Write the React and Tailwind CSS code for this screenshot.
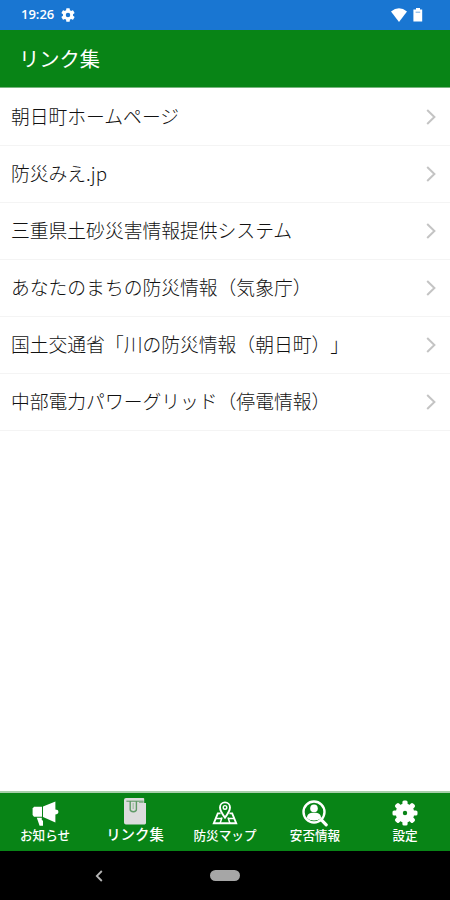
import React, { useState } from 'react';

const LINKS = [
  '朝日町ホームページ',
  '防災みえ.jp',
  '三重県土砂災害情報提供システム',
  'あなたのまちの防災情報（気象庁）',
  '国土交通省「川の防災情報（朝日町）」',
  '中部電力パワーグリッド（停電情報）',
];

// Icons
const MegaphoneIcon = () => (
  <svg width="27" height="25" viewBox="0 0 27 25" fill="#fff">
    <path d="M2 5.8h8v10H2L.6 14V7.4z" />
    <path d="M11 5.6L23.4.4v21L11 16z" />
    <path d="M23 8.6q3.4 0 3.4 2.4T23 13.4z" />
    <path d="M4.8 16.8h5v2.2l1.2.8v5H7.6z" />
  </svg>
);

const BookIcon = () => (
  <svg width="22" height="27" viewBox="0 0 22 27">
    <path d="M2 0h17.4q.8 0 .8.8V5H22v20q0 1.4-1.4 1.4H2Q0 26.4 0 24.4V2q0-2 2-2z" fill="#dcdcdc" />
    <path d="M2.4 3.2h17.2" stroke="#5f9a66" strokeWidth="1.1" />
    <path d="M6.2 3v8.6q0 2 3.2 2.2 3-.2 3-2.2V3" fill="none" stroke="#5f9a66" strokeWidth="1.4" />
    <path d="M9.2 5v6" stroke="#a8c4aa" strokeWidth="1.4" />
    <path d="M15 4.4h4.6" stroke="#8fb593" strokeWidth="1.2" />
  </svg>
);

const MapIcon = () => (
  <svg width="26" height="24" viewBox="0 0 26 24" fill="none" stroke="#fff" strokeWidth="1.9">
    <path d="M13 16.6C9.8 12.2 8 9.2 8 6.4a5 5 0 0 1 10 0c0 2.8-1.8 5.8-5 10.2z" />
    <circle cx="13" cy="6.4" r="1.8" strokeWidth="1.4" />
    <path d="M8.6 12.4H5.8L1.8 22.2h22.4L20.2 12.4h-2.8" />
    <path d="M3.8 17.4h6.4M15.8 17.4h6.4M10 16.4l-2 6M16 16.4l2 6" strokeWidth="1.5" />
  </svg>
);

const PersonSearchIcon = () => (
  <svg width="26" height="27" viewBox="0 0 26 27" fill="none">
    <circle cx="12" cy="12" r="10.5" stroke="#fff" strokeWidth="2.4" />
    <circle cx="12" cy="8.4" r="3.8" fill="#fff" />
    <path d="M5 18.2c0-3.8 1.9-5 5-5.4h4c3.1.4 5 1.6 5 5.4q-2.8 2.2-7 2.2t-7-2.2z" fill="#fff" />
    <path d="M19.4 19.8l4.8 5" stroke="#fff" strokeWidth="3.2" strokeLinecap="round" />
  </svg>
);

const CogIcon = () => (
  <svg width="26" height="26" viewBox="-13 -13 26 26" fill="#fff">
    {[0, 45, 90, 135].map((angle) => (
      <rect key={angle} x="-2.6" y="-12.5" width="5.2" height="25" rx="1.6" transform={`rotate(${angle})`} />
    ))}
    <circle r="9.4" />
    <circle r="2.2" fill="#088416" />
  </svg>
);

const StatusGearIcon = () => (
  <svg width="14" height="14" viewBox="2 2 20 20" fill="#fff">
    <path d="M19.14 12.94c.04-.3.06-.61.06-.94 0-.32-.02-.64-.07-.94l2.03-1.58a.49.49 0 0 0 .12-.61l-1.92-3.32a.49.49 0 0 0-.59-.22l-2.39.96c-.5-.38-1.03-.7-1.62-.94l-.36-2.54a.48.48 0 0 0-.48-.41h-3.84a.47.47 0 0 0-.47.41l-.36 2.54c-.59.24-1.13.57-1.62.94l-2.39-.96a.48.48 0 0 0-.59.22L2.74 8.87a.47.47 0 0 0 .12.61l2.03 1.58c-.05.3-.09.63-.09.94s.02.64.07.94l-2.03 1.58a.49.49 0 0 0-.12.61l1.92 3.32c.12.22.37.29.59.22l2.39-.96c.5.38 1.03.7 1.62.94l.36 2.54c.05.24.24.41.48.41h3.84c.24 0 .44-.17.47-.41l.36-2.54c.59-.24 1.13-.56 1.62-.94l2.39.96c.22.08.47 0 .59-.22l1.92-3.32a.47.47 0 0 0-.12-.61zM12 15.2a3.2 3.2 0 1 1 0-6.4 3.2 3.2 0 0 1 0 6.4z" />
  </svg>
);

const TABS = [
  { id: 'news', label: 'お知らせ', icon: MegaphoneIcon },
  { id: 'links', label: 'リンク集', icon: BookIcon },
  { id: 'map', label: '防災マップ', icon: MapIcon },
  { id: 'safety', label: '安否情報', icon: PersonSearchIcon },
  { id: 'settings', label: '設定', icon: CogIcon },
];

const StatusBar = () => (
  <div className="flex h-[30px] items-center justify-between bg-[#1976d2] pr-[27px] pl-[21px] text-white">
    <div className="flex items-center gap-[5px]">
      <span className="w-[35px] font-['Open_Sans',sans-serif] text-[13px] font-semibold whitespace-nowrap">19:26</span>
      <StatusGearIcon />
    </div>
    <div className="flex items-center gap-[6px]">
      <svg width="16" height="14" viewBox="0 0 16 14" fill="#fff">
        <path d="M0 3.6Q8-3 16 3.6L8 14z" />
      </svg>
      <svg width="10" height="14" viewBox="0 0 10 14" fill="#fff">
        <path d="M3 0h4v1.4h2.2v12.2H.4V1.4H3z" />
        <path d="M2.6 4.2h4.6" stroke="#1976d2" strokeWidth="1" opacity="0.6" />
      </svg>
    </div>
  </div>
);

const LinkRow = ({ title }) => (
  <li className="flex h-[57px] items-center justify-between border-b border-[#f4f4f4] pr-[14px] pb-px pl-[11px]">
    <span className="text-[18.8px] leading-none font-light whitespace-nowrap text-[#111] [text-spacing-trim:space-all]">
      {title}
    </span>
    <svg width="10" height="16" viewBox="0 0 10 16" fill="none" stroke="#c4c4c4" strokeWidth="2">
      <path d="M1.2 1L8.4 8l-7.2 7" />
    </svg>
  </li>
);

const App = () => {
  const [activeTab, setActiveTab] = useState('links');

  return (
    <div className="flex h-[900px] w-[450px] flex-col overflow-hidden bg-white font-['Noto_Sans_CJK_JP',sans-serif]">
      <StatusBar />

      {/* Header */}
      <header className="flex h-[58px] items-center border-b border-[#78b57e] bg-[#088416] pl-[19px]">
        <h1 className="text-[20.3px] leading-none font-normal text-white">リンク集</h1>
      </header>

      {/* Links */}
      <ul className="flex-1 pt-px">
        {LINKS.map((title) => (
          <LinkRow key={title} title={title} />
        ))}
      </ul>

      {/* Tab bar */}
      <nav className="grid h-[60px] grid-cols-5 border-t-2 border-[#a7cfaa] bg-[#088416]">
        {TABS.map(({ id, label, icon: Icon }) => {
          const active = id === activeTab;
          return (
            <button
              key={id}
              type="button"
              onClick={() => setActiveTab(id)}
              className="flex flex-col items-center pt-[3px] text-white"
            >
              <span className={active ? 'flex h-[30px] items-start pt-[2px]' : 'flex h-[32px] items-center pt-[2px]'}>
                <Icon />
              </span>
              <span
                className={
                  active
                    ? 'text-[14.4px] leading-[16px] font-medium whitespace-nowrap'
                    : 'text-[12.6px] leading-[14px] font-medium whitespace-nowrap'
                }
              >
                {label}
              </span>
            </button>
          );
        })}
      </nav>

      {/* System navigation */}
      <div className="grid h-[49px] grid-cols-[198px_54px_198px] items-center bg-black">
        <svg className="justify-self-center" width="8" height="12" viewBox="0 0 8 12" fill="none" stroke="#b5b5b5" strokeWidth="1.8">
          <path d="M6.8 1L1.8 6l5 5" />
        </svg>
        <div className="h-[11px] w-[30px] justify-self-center rounded-full bg-[#a6a6a6]" />
      </div>
    </div>
  );
};

export default App;
